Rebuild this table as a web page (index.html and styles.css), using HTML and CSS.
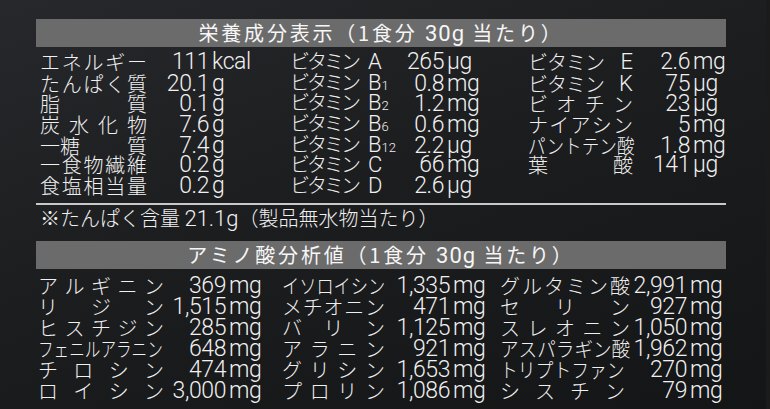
FILE: index.html
```html
<!DOCTYPE html>
<html lang="ja">
<head>
<meta charset="utf-8">
<link rel="stylesheet" href="styles.css">
</head>
<body>
<div class="panel">
  <div class="bar">栄養成分表示（1食分 <span class="lat">30g</span> 当たり）</div>
  <div class="nut">
    <div class="row">
      <div class="lab j"><span>エ</span><span>ネ</span><span>ル</span><span>ギ</span><span>ー</span></div><div class="num">111</div><div class="unit">kcal</div>
      <div class="lab v"><span class="vt">ビタミン</span><span class="lat">A</span></div><div class="num">265</div><div class="unit">μg</div>
      <div class="lab j"><span class="vt2">ビタミン</span><span class="lat">E</span></div><div class="num">2.6</div><div class="unit">mg</div>
    </div>
    <div class="row">
      <div class="lab j"><span>た</span><span>ん</span><span>ぱ</span><span>く</span><span>質</span></div><div class="num">20.1</div><div class="unit">g</div>
      <div class="lab v"><span class="vt">ビタミン</span><span class="lat">B</span><span class="sub">1</span></div><div class="num">0.8</div><div class="unit">mg</div>
      <div class="lab j"><span class="vt2">ビタミン</span><span class="lat">K</span></div><div class="num">75</div><div class="unit">μg</div>
    </div>
    <div class="row">
      <div class="lab j"><span>脂</span><span>質</span></div><div class="num">0.1</div><div class="unit">g</div>
      <div class="lab v"><span class="vt">ビタミン</span><span class="lat">B</span><span class="sub">2</span></div><div class="num">1.2</div><div class="unit">mg</div>
      <div class="lab j"><span>ビ</span><span>オ</span><span>チ</span><span>ン</span></div><div class="num">23</div><div class="unit">μg</div>
    </div>
    <div class="row">
      <div class="lab j"><span>炭</span><span>水</span><span>化</span><span>物</span></div><div class="num">7.6</div><div class="unit">g</div>
      <div class="lab v"><span class="vt">ビタミン</span><span class="lat">B</span><span class="sub">6</span></div><div class="num">0.6</div><div class="unit">mg</div>
      <div class="lab j"><span>ナ</span><span>イ</span><span>ア</span><span>シ</span><span>ン</span></div><div class="num">5</div><div class="unit">mg</div>
    </div>
    <div class="row">
      <div class="lab j"><span>一糖</span><span>質</span></div><div class="num">7.4</div><div class="unit">g</div>
      <div class="lab v"><span class="vt">ビタミン</span><span class="lat">B</span><span class="sub">12</span></div><div class="num">2.2</div><div class="unit">μg</div>
      <div class="lab"><span class="sq sq88">パントテン酸</span></div><div class="num">1.8</div><div class="unit">mg</div>
    </div>
    <div class="row">
      <div class="lab j"><span>一</span><span>食</span><span>物</span><span>繊</span><span>維</span></div><div class="num">0.2</div><div class="unit">g</div>
      <div class="lab v"><span class="vt">ビタミン</span><span class="lat">C</span></div><div class="num">66</div><div class="unit">mg</div>
      <div class="lab j"><span>葉</span><span>酸</span></div><div class="num">141</div><div class="unit">μg</div>
    </div>
    <div class="row">
      <div class="lab j"><span>食</span><span>塩</span><span>相</span><span>当</span><span>量</span></div><div class="num">0.2</div><div class="unit">g</div>
      <div class="lab v"><span class="vt">ビタミン</span><span class="lat">D</span></div><div class="num">2.6</div><div class="unit">μg</div>
      <div class="lab"></div><div class="num"></div><div class="unit"></div>
    </div>
  </div>
  <div class="rule"></div>
  <div class="note">※たんぱく含量 <span class="lat">21.1g</span>（製品無水物当たり）</div>

  <div class="bar bar2">アミノ酸分析値（1食分 <span class="lat">30g</span> 当たり）</div>
  <div class="amino">
    <div class="row">
      <div class="lab j"><span>ア</span><span>ル</span><span>ギ</span><span>ニ</span><span>ン</span></div><div class="num">369</div><div class="unit">mg</div>
      <div class="lab"><span class="sq sq86">イソロイシン</span></div><div class="num">1,335</div><div class="unit">mg</div>
      <div class="lab j"><span>グ</span><span>ル</span><span>タ</span><span>ミ</span><span>ン</span><span>酸</span></div><div class="num">2,991</div><div class="unit">mg</div>
    </div>
    <div class="row">
      <div class="lab j"><span>リ</span><span>ジ</span><span>ン</span></div><div class="num">1,515</div><div class="unit">mg</div>
      <div class="lab j"><span>メ</span><span>チ</span><span>オ</span><span>ニ</span><span>ン</span></div><div class="num">471</div><div class="unit">mg</div>
      <div class="lab j"><span>セ</span><span>リ</span><span>ン</span></div><div class="num">927</div><div class="unit">mg</div>
    </div>
    <div class="row">
      <div class="lab j"><span>ヒ</span><span>ス</span><span>チ</span><span>ジ</span><span>ン</span></div><div class="num">285</div><div class="unit">mg</div>
      <div class="lab j"><span>バ</span><span>リ</span><span>ン</span></div><div class="num">1,125</div><div class="unit">mg</div>
      <div class="lab j"><span>ス</span><span>レ</span><span>オ</span><span>ニ</span><span>ン</span></div><div class="num">1,050</div><div class="unit">mg</div>
    </div>
    <div class="row">
      <div class="lab"><span class="sq sq78">フェニルアラニン</span></div><div class="num">648</div><div class="unit">mg</div>
      <div class="lab j"><span>ア</span><span>ラ</span><span>ニ</span><span>ン</span></div><div class="num">921</div><div class="unit">mg</div>
      <div class="lab"><span class="sq sq93">アスパラギン酸</span></div><div class="num">1,962</div><div class="unit">mg</div>
    </div>
    <div class="row">
      <div class="lab j"><span>チ</span><span>ロ</span><span>シ</span><span>ン</span></div><div class="num">474</div><div class="unit">mg</div>
      <div class="lab j"><span>グ</span><span>リ</span><span>シ</span><span>ン</span></div><div class="num">1,653</div><div class="unit">mg</div>
      <div class="lab"><span class="sq sq89">トリプトファン</span></div><div class="num">270</div><div class="unit">mg</div>
    </div>
    <div class="row">
      <div class="lab j"><span>ロ</span><span>イ</span><span>シ</span><span>ン</span></div><div class="num">3,000</div><div class="unit">mg</div>
      <div class="lab j"><span>プ</span><span>ロ</span><span>リ</span><span>ン</span></div><div class="num">1,086</div><div class="unit">mg</div>
      <div class="lab j short"><span>シ</span><span>ス</span><span>チ</span><span>ン</span></div><div class="num">79</div><div class="unit">mg</div>
    </div>
  </div>
</div>
</body>
</html>
```

FILE: styles.css
```css
* { box-sizing: border-box; }
html, body { margin: 0; padding: 0; }
body {
  width: 770px;
  height: 409px;
  overflow: hidden;
  background:
    linear-gradient(to left, #1b1b1c 0, #1b1b1c 4px, transparent 4px),
    linear-gradient(160deg, #27282b 0%, #1c1d1f 45%, #141516 100%);
  color: #f0f0f0;
  font-family: "Noto Sans CJK JP", "Noto Sans", sans-serif;
  font-weight: 300;
  font-size: 20px;
}
.panel {
  width: 690px;
  margin-left: 36px;
  padding-top: 19px;
}
.bar {
  height: 28px;
  background: #6b6b6b;
  color: #f6f6f6;
  text-align: center;
  line-height: 28px;
  letter-spacing: 2.8px;
  font-size: 20px;
  font-weight: 400;
}
.bar .lat { font-size: 22px; font-weight: 400; letter-spacing: 1px; }
.bar2 { margin-top: 12px; }
.nut { margin-top: 4px; padding-left: 4px; }
.amino { margin-top: 6px; padding-left: 2px; }
.row {
  display: grid;
  align-items: center;
  white-space: nowrap;
}
.nut .row {
  height: 20.7px;
  line-height: 20.7px;
  grid-template-columns: 107px 62px 81px 100px 54px 84px 105px 57px 36px;
}
.amino .row {
  height: 21px;
  line-height: 21px;
  grid-template-columns: 126px 62px 56px 103px 65px 50px 130px 57px 39px;
}
.lab { overflow: visible; }
.j { display: flex; justify-content: space-between; }
.j.short { padding-right: 5px; }
.v { display: flex; align-items: baseline; }
.vt { letter-spacing: -3px; margin-right: 10px; }
.vt2 { letter-spacing: -1px; }
.lat { font-family: Roboto, "Liberation Sans", sans-serif; font-weight: 300; font-size: 22px; }
.sub { font-family: Roboto, "Liberation Sans", sans-serif; font-weight: 300; font-size: 13px; }
.sq { display: inline-block; transform-origin: left center; }
.sq78 { transform: scaleX(0.78); }
.sq86 { transform: scaleX(0.86); }
.sq88 { transform: scaleX(0.88); }
.sq89 { transform: scaleX(0.89); }
.sq93 { transform: scaleX(0.93); }
.num {
  text-align: right;
  font-family: Roboto, "Liberation Sans", sans-serif;
  font-weight: 300;
  font-size: 23px;
  letter-spacing: -0.4px;
}
.unit {
  padding-left: 3px;
  font-family: Roboto, "Liberation Sans", sans-serif;
  font-weight: 300;
  font-size: 23px;
  letter-spacing: -0.4px;
}
.rule {
  margin-top: 7px;
  height: 2px;
  background: #c9c9c9;
}
.note {
  margin-top: 2px;
  padding-left: 4px;
  height: 22px;
  line-height: 22px;
}
```
